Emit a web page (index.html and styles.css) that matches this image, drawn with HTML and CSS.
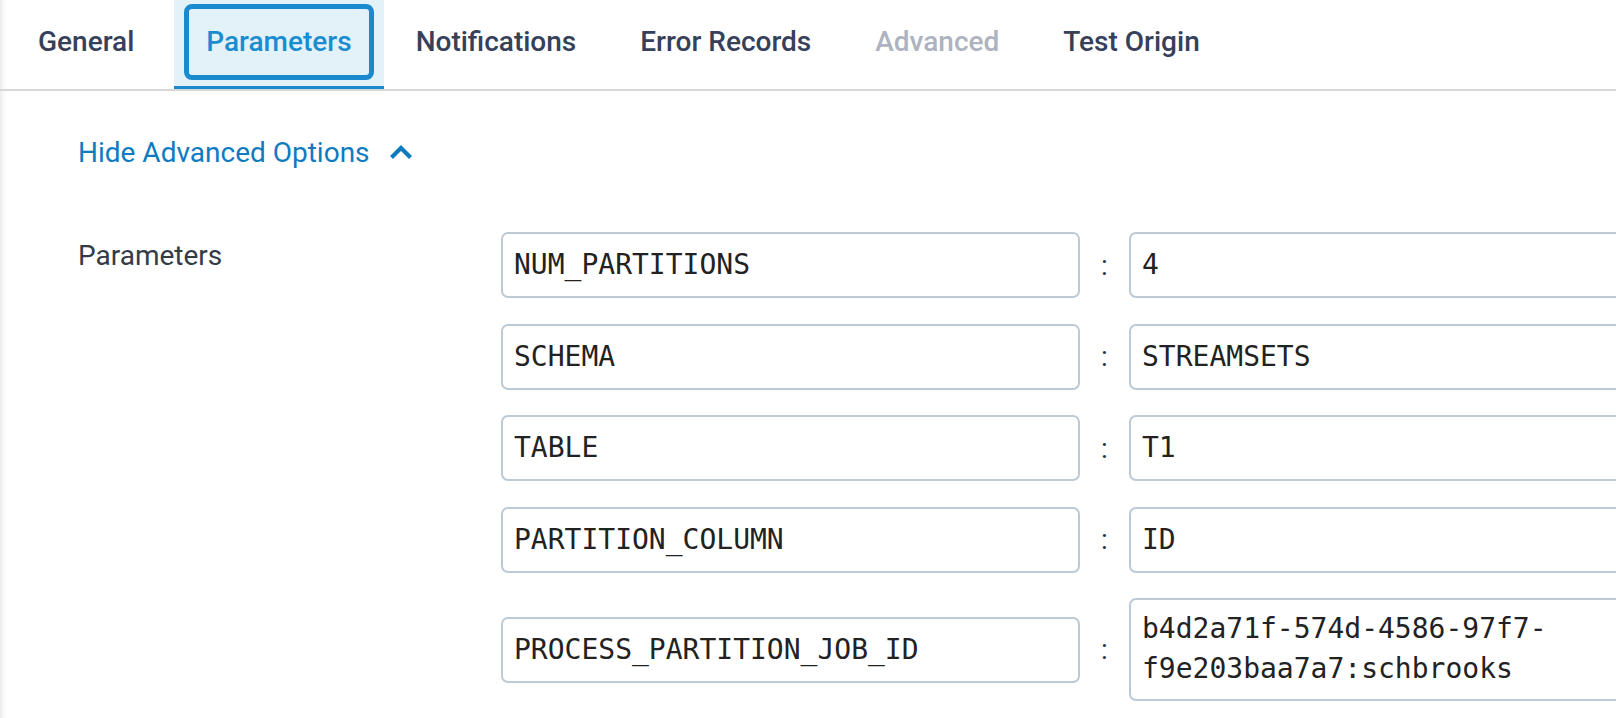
FILE: index.html
```html
<!DOCTYPE html>
<html lang="en">
<head>
<meta charset="utf-8">
<title>Parameters</title>
<link rel="stylesheet" href="styles.css">
</head>
<body>
<div class="page">
  <nav class="tabs">
    <div class="tab">General</div>
    <div class="tab tab-active">Parameters</div>
    <div class="tab">Notifications</div>
    <div class="tab">Error Records</div>
    <div class="tab tab-disabled">Advanced</div>
    <div class="tab">Test Origin</div>
  </nav>
  <main class="content">
    <div class="toggle">
      <span>Hide Advanced Options</span>
      <svg class="chevron" width="24" height="15" viewBox="0 0 24 15" aria-hidden="true">
        <path d="M2.5 12.5 L12 3 L21.5 12.5" fill="none" stroke="currentColor" stroke-width="4.2" stroke-linecap="butt" stroke-linejoin="miter"/>
      </svg>
    </div>
    <div class="field">
      <div class="field-label">Parameters</div>
      <div class="params">
        <div class="param-row">
          <div class="box key">NUM_PARTITIONS</div>
          <div class="sep">:</div>
          <div class="box value">4</div>
        </div>
        <div class="param-row">
          <div class="box key">SCHEMA</div>
          <div class="sep">:</div>
          <div class="box value">STREAMSETS</div>
        </div>
        <div class="param-row">
          <div class="box key">TABLE</div>
          <div class="sep">:</div>
          <div class="box value">T1</div>
        </div>
        <div class="param-row">
          <div class="box key">PARTITION_COLUMN</div>
          <div class="sep">:</div>
          <div class="box value">ID</div>
        </div>
        <div class="param-row">
          <div class="box key">PROCESS_PARTITION_JOB_ID</div>
          <div class="sep">:</div>
          <div class="box value value-multi">b4d2a71f-574d-4586-97f7-f9e203baa7a7:schbrooks</div>
        </div>
      </div>
    </div>
  </main>
</div>
</body>
</html>
```

FILE: styles.css
```css
html, body {
  margin: 0;
  padding: 0;
  overflow: hidden;
  background: #ffffff;
}

body {
  font-family: Roboto, "Liberation Sans", Arial, sans-serif;
  width: 1616px;
  height: 718px;
}

.page {
  height: 718px;
  background: linear-gradient(to right, #ebebeb 0, #f7f7f7 3px, #ffffff 7px);
}

.tabs {
  display: flex;
  padding-left: 6px;
  height: 89px;
  border-bottom: 2px solid #d7d7d7;
}

.tab {
  position: relative;
  box-sizing: border-box;
  height: 89px;
  padding: 25px 32px 0;
  line-height: 33px;
  font-size: 28px;
  font-weight: 500;
  color: #36405a;
  border-bottom: 3px solid transparent;
  white-space: nowrap;
}

.tab-active {
  margin-left: 8px;
  background: #e3f1f9;
  color: #1a8dd1;
  border-bottom-color: #1a8acf;
}

.tab-active::after {
  content: "";
  position: absolute;
  top: 4px;
  left: 10px;
  right: 10px;
  bottom: 6px;
  border: 5px solid #1a8acf;
  border-radius: 8px;
}

.tab-disabled {
  color: #adb3c0;
}

.content {
  padding: 45px 0 0 78px;
}

.toggle {
  display: flex;
  align-items: center;
  gap: 19px;
  font-size: 28px;
  line-height: 33px;
  color: #0e7bbf;
}

.chevron {
  display: block;
  margin-top: -1px;
}

.field {
  display: flex;
  margin-top: 63px;
}

.field-label {
  width: 423px;
  flex: none;
  padding-top: 7px;
  font-size: 28px;
  line-height: 33px;
  color: #333b46;
}

.params {
  display: flex;
  flex-direction: column;
  gap: 25.5px;
}

.param-row {
  display: flex;
  align-items: center;
}

.box {
  box-sizing: border-box;
  flex: none;
  width: 579px;
  padding: 11px 11px;
  border: 2px solid #bccad6;
  border-radius: 7px;
  font-family: "DejaVu Sans Mono", "Liberation Mono", monospace;
  font-size: 28px;
  line-height: 40px;
  color: #222222;
  background: #ffffff;
}

.value-multi {
  padding-top: 9px;
  padding-bottom: 10px;
  overflow-wrap: break-word;
}

.sep {
  flex: none;
  width: 49px;
  text-align: center;
  font-size: 28px;
  line-height: 33px;
  color: #333333;
}
```
